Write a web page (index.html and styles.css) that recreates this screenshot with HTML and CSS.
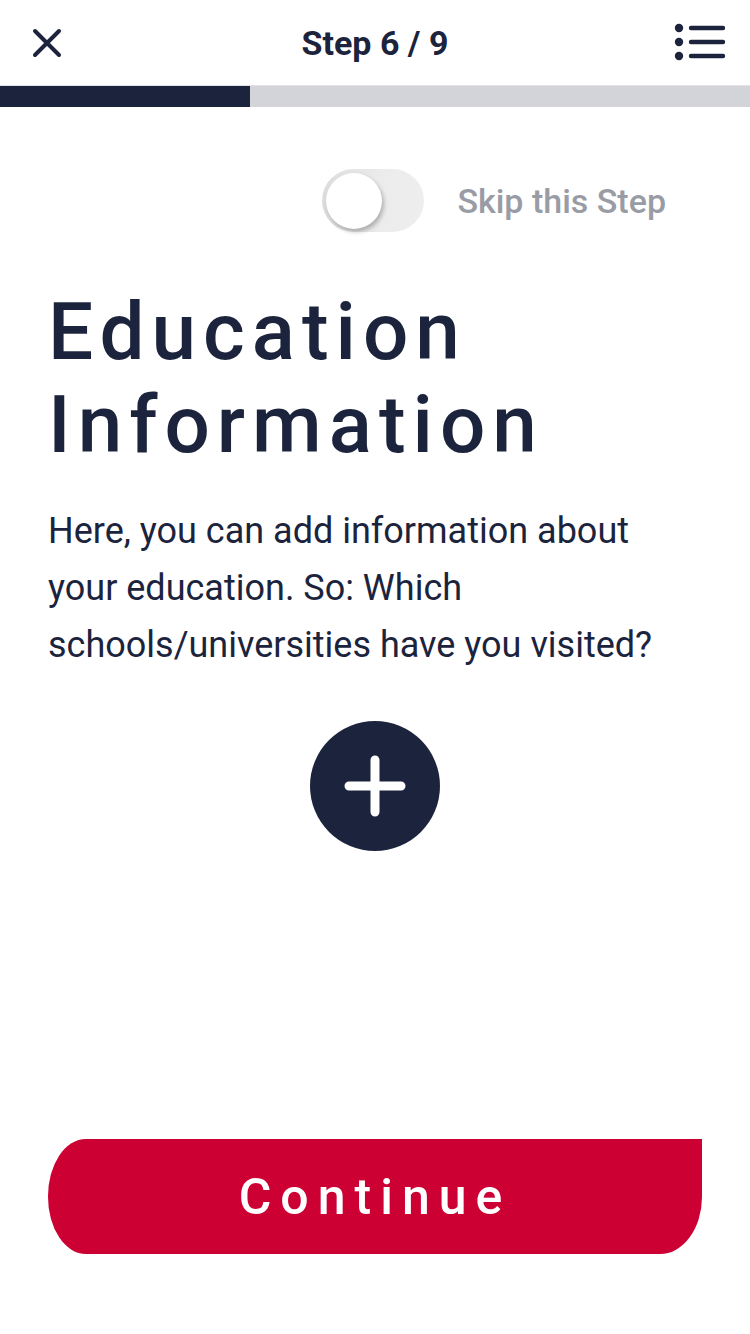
FILE: index.html
```html
<!DOCTYPE html>
<html lang="en">
<head>
<meta charset="utf-8">
<title>Step 6 / 9</title>
<link rel="stylesheet" href="styles.css">
</head>
<body>
<div class="page">
  <header class="topbar">
    <button class="icon-btn close" aria-label="Close">
      <svg width="30" height="30" viewBox="0 0 30 30"><path d="M3 3 L27 27 M27 3 L3 27" stroke="#1c243d" stroke-width="4" stroke-linecap="round"/></svg>
    </button>
    <div class="step-title">Step 6 / 9</div>
    <button class="icon-btn menu" aria-label="Menu">
      <svg width="54" height="40" viewBox="0 0 54 40"><g fill="#1c243d"><circle cx="5" cy="5" r="4.2"/><circle cx="5" cy="19" r="4.2"/><circle cx="5" cy="33" r="4.2"/></g><g stroke="#1c243d" stroke-width="4.4" stroke-linecap="round"><path d="M17 5 H49 M17 19 H49 M17 33 H49"/></g></svg>
    </button>
  </header>
  <div class="progress"><div class="progress-fill"></div></div>

  <main class="content">
    <div class="skip-row">
      <div class="toggle"><div class="knob"></div></div>
      <span class="skip-label">Skip this Step</span>
    </div>
    <h1 class="title">Education Information</h1>
    <p class="desc">Here, you can add information about your education. So: Which schools/universities have you visited?</p>
    <div class="add-wrap">
      <button class="add-btn" aria-label="Add">
        <svg width="62" height="62" viewBox="0 0 62 62"><path d="M31 5 V57 M5 31 H57" stroke="#fff" stroke-width="9" stroke-linecap="round"/></svg>
      </button>
    </div>
  </main>

  <div class="footer">
    <button class="continue">Continue</button>
  </div>
</div>
</body>
</html>
```
FILE: styles.css
```css
* { box-sizing: border-box; }
html, body { margin: 0; padding: 0; background: #fff; }
body { font-family: Roboto, "Noto Sans", sans-serif; color: #1c243d; }
.page { width: 750px; height: 1334px; display: flex; flex-direction: column; }

.topbar {
  height: 86px;
  display: grid;
  grid-template-columns: 1fr auto 1fr;
  align-items: center;
  padding: 0 22px;
  border-bottom: 1px solid #e2e3e6;
}
.icon-btn { background: none; border: 0; padding: 0; display: flex; }
.close { margin-left: 10px; }
.menu { justify-self: end; }
.close svg { width: 30px; height: 30px; }
.step-title { font-size: 34px; font-weight: 700; color: #1c243d; }

.progress { height: 21px; background: #d3d4d9; }
.progress-fill { width: 250px; height: 100%; background: #1c243d; }

.content { flex: 1; padding: 0 48px; display: flex; flex-direction: column; }

.skip-row {
  display: flex;
  justify-content: flex-end;
  align-items: center;
  gap: 33px;
  margin-top: 62px;
  padding-right: 36px;
}
.toggle {
  width: 102px; height: 63px;
  border-radius: 32px;
  background: linear-gradient(90deg, #dcdcdc 0%, #ececec 60%, #eeeeee 100%);
  display: flex; align-items: center;
  padding-left: 4px;
}
.knob {
  width: 56px; height: 56px; border-radius: 50%;
  background: #fff;
  box-shadow: 2px 3px 4px rgba(0,0,0,0.25);
}
.skip-label { font-size: 34px; font-weight: 500; color: #9a9ca5; }

.title {
  margin: 54px 0 0 0;
  font-size: 80px;
  font-weight: 500;
  line-height: 93px;
  letter-spacing: 7px;
  color: #1c243d;
}
.desc {
  margin: 31px 0 0 0;
  font-size: 36px;
  line-height: 57px;
  color: #1c243d;
}
.add-wrap { display: flex; justify-content: center; margin-top: 47px; }
.add-btn {
  width: 130px; height: 130px; border-radius: 50%;
  background: #1c243d; border: 0; padding: 0;
  display: flex; align-items: center; justify-content: center;
}

.footer { padding: 0 48px 80px 48px; }
.continue {
  width: 654px; height: 115px;
  border: 0;
  background: #cc0033;
  color: #fff;
  font-family: Roboto, sans-serif;
  font-size: 50px;
  font-weight: 500;
  letter-spacing: 9px;
  border-radius: 38px 0 42px 38px / 57px 0 57px 57px;
  padding: 0;
}
```
